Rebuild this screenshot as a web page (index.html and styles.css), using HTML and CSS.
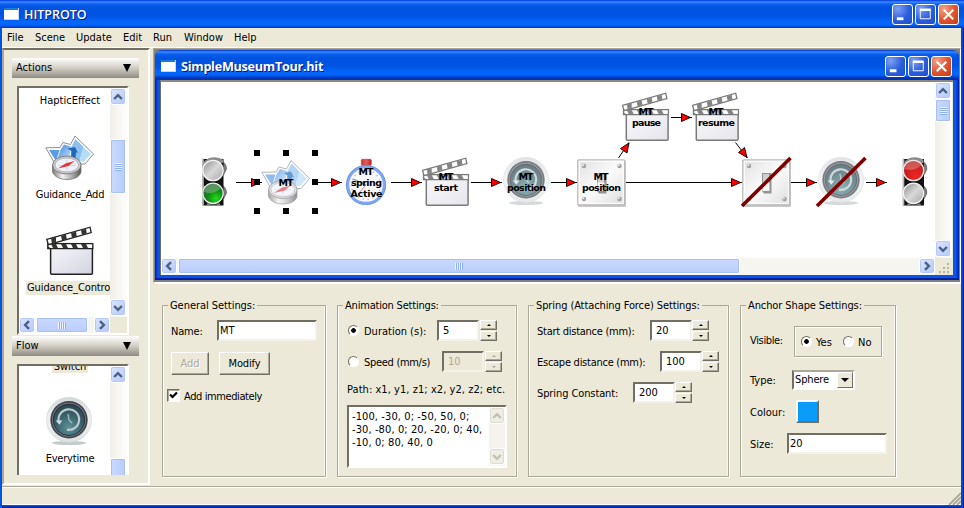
FILE: index.html
```html
<!DOCTYPE html>
<html lang="en">
<head>
<meta charset="utf-8">
<title>HITPROTO</title>
<link rel="stylesheet" href="styles.css">
</head>
<body>
<svg class="defs" aria-hidden="true">
  <defs>
    <linearGradient id="gBody" x1="0" y1="0" x2="1" y2="1"><stop offset="0" stop-color="#f6f6fa"/><stop offset="1" stop-color="#d4d4e0"/></linearGradient>
    <linearGradient id="gMetal" x1="0" y1="0" x2="1" y2="0"><stop offset="0" stop-color="#777"/><stop offset=".35" stop-color="#f2f2f2"/><stop offset=".7" stop-color="#aaa"/><stop offset="1" stop-color="#555"/></linearGradient>
    <linearGradient id="gMap" x1="0" y1="0" x2="1" y2="1"><stop offset="0" stop-color="#3f83dc"/><stop offset="1" stop-color="#c5e4fb"/></linearGradient>
    <linearGradient id="gPlate" x1="0" y1="0" x2="1" y2="1"><stop offset="0" stop-color="#d9d9d9"/><stop offset=".5" stop-color="#fbfbfb"/><stop offset="1" stop-color="#d5d5d5"/></linearGradient>
    <radialGradient id="gFace" cx=".5" cy=".75" r=".7"><stop offset="0" stop-color="#5d9299"/><stop offset=".6" stop-color="#39616a"/><stop offset="1" stop-color="#2c4650"/></radialGradient>
    <linearGradient id="gRim" x1="0" y1="0" x2="0" y2="1"><stop offset="0" stop-color="#d4d8da"/><stop offset=".5" stop-color="#f0f2f2"/><stop offset="1" stop-color="#dce0e1"/></linearGradient>
    <linearGradient id="gOff" x1="0" y1="0" x2="1" y2="1"><stop offset="0" stop-color="#8c8c8c"/><stop offset=".5" stop-color="#d8d8d8"/><stop offset="1" stop-color="#a8a8a8"/></linearGradient>
    <radialGradient id="gGreen" cx=".65" cy=".75" r=".65"><stop offset="0" stop-color="#1ee01a"/><stop offset=".6" stop-color="#128a16"/><stop offset="1" stop-color="#2b6b35"/></radialGradient>
    <radialGradient id="gRed" cx=".6" cy=".75" r=".7"><stop offset="0" stop-color="#f02525"/><stop offset="1" stop-color="#b51c1c"/></radialGradient>
    <linearGradient id="gCap" x1="0" y1="0" x2="1" y2="0"><stop offset="0" stop-color="#c33"/><stop offset=".5" stop-color="#e06060"/><stop offset="1" stop-color="#b22"/></linearGradient>
  </defs>
  <symbol id="clapper" viewBox="0 0 48 50">
    <rect x="4.6" y="20" width="41.8" height="28.3" rx="1" fill="url(#gBody)" stroke="#222" stroke-width="1.5"/>
    <g stroke="#222" stroke-width="1.3">
      <rect x="1.8" y="17.6" width="45" height="5" fill="#fff"/>
      <path d="M.8 13.4 44 1.2 45.2 6.6 2.4 18.6z" fill="#fff"/>
    </g>
    <path d="M5 18h5l2 4H7zM15 18h5l2 4h-5zM25 18h5l2 4h-5zM35 18h5l2 4h-5zM5 12.5l5-1.4 0 5.3-4 1.2zM15 9.8l5-1.4.8 4.8-4.8 1.4zM25 7l5-1.4.8 4.8-4.8 1.4zM35 4.2l5-1.4.8 4.6-4.8 1.5z" fill="#333"/>
    <path d="M1.5 20v3h4z" fill="#222"/>
  </symbol>
  <symbol id="guide" viewBox="0 0 50 46">
    <path d="M.8 12.800 15 12.500 18 7.500 25.500 9.500 30 1 48.500 19 40 29 10 29z" fill="#fff" stroke="#8a8f98" stroke-width="1" stroke-linejoin="round"/>
    <path d="M4 15 14.500 15 11 26z" fill="#5b9be6"/>
    <path d="M15.500 15 19 9.500 26 11.500 24 25 12 25z" fill="url(#gMap)"/>
    <path d="M26.500 11.500 30.500 4 38.500 12 34.500 26 25 26z" fill="#8cc0f0"/>
    <path d="M38.500 12 46 19 38.500 27 34.500 26z" fill="#b5dcf8"/>
    <path d="M22.500 13.500 30 12 33 18 31 17.300 30.500 23.500 26 23.500 26.500 16z" fill="#1d68bb"/>
    <path d="M7.500 30v7c2 5 8 7.500 14.500 7.500S35 42 36 37v-7z" fill="url(#gMetal)" stroke="#777" stroke-width=".8"/>
    <ellipse cx="21.800" cy="30" rx="14.200" ry="9" fill="#ccc" stroke="#777" stroke-width=".9"/>
    <ellipse cx="21.800" cy="30" rx="11.800" ry="7" fill="#eef0fb" stroke="#999" stroke-width=".6"/>
    <path d="M22 24.500v11M14 30.500h16" stroke="#b4c0d0" stroke-width=".6"/>
    <path d="M13 33.500 20.500 28.500l9-2.500L23.500 31z" fill="#e23434"/>
  </symbol>
  <symbol id="clock" viewBox="0 0 46 49">
    <ellipse cx="23" cy="46" rx="17" ry="2" fill="#aeb8b8" opacity=".75"/>
    <circle cx="23" cy="22.800" r="22.500" fill="url(#gRim)" stroke="#d2d6d8" stroke-width=".7"/>
    <circle cx="23" cy="22.800" r="18.700" fill="#40444a"/>
    <circle cx="23" cy="22.800" r="17" fill="#787c80"/>
    <circle cx="23" cy="22.800" r="15.800" fill="url(#gFace)" stroke="#223" stroke-width=".8"/>
    <path d="M12.800 25A10.300 10.300 0 1 1 21 32.700" fill="none" stroke="#bccbce" stroke-width="2.200"/>
    <path d="M9.700 23.500h6.700l-3 4.300z" fill="#d5e0e2"/>
    <path d="M22 17l1 6 3 3" fill="none" stroke="#a5c0c5" stroke-width="1.300"/>
  </symbol>
  <symbol id="plate" viewBox="0 0 49 48">
    <rect x="1" y="1.500" width="48" height="46.500" rx="1" fill="#bbb"/>
    <rect x=".8" y=".8" width="46.800" height="45" rx="1" fill="url(#gPlate)" stroke="#aaa" stroke-width="1.300"/>
    <rect x="2.300" y="2.300" width="44" height="42" fill="none" stroke="#fff"/>
    <g fill="#888"><circle cx="7" cy="7" r="2.200"/><circle cx="42.500" cy="7" r="2.200"/><circle cx="7" cy="40" r="2.200"/><circle cx="42.500" cy="40" r="2.200"/></g>
    <g fill="#eee"><circle cx="6.300" cy="6.300" r="1"/><circle cx="41.800" cy="6.300" r="1"/><circle cx="6.300" cy="39.300" r="1"/><circle cx="41.800" cy="39.300" r="1"/></g>
    <path d="M20 14h9.500v20.500H22L20 32z" fill="#777"/>
    <rect x="21" y="15" width="6" height="9" fill="#c4c4c4"/><rect x="20.500" y="23.500" width="7" height="8.500" fill="#f8f8f8"/>
  </symbol>
  <symbol id="light" viewBox="0 0 26 49">
    <path d="M13 3c9-1 13 4 13 9l-3 6H12zM13 27c9-1 13 4 13 9l-3 6H12z" fill="#777"/>
    <path d="M1.500 2h21v46.500h-21z" fill="#111"/>
    <path d="M1 1.500h1.800v47H1z" fill="#bbb"/>
    <path d="M3 4.500c5-5.500 14-5.500 19-1.500v3H3z" fill="#8c8c8c"/>
    <path d="M3 6v6l8-4M3 29v6l8-4" fill="#c4c4c4"/>
    <path d="M6 47c4 2 9 2 13 0" stroke="#888" stroke-width="1.500" fill="none"/>
  </symbol>
  <symbol id="up" viewBox="0 0 9 9"><path d="M1 6.300 4.500 2.800 8 6.300" fill="none" stroke="currentColor" stroke-width="2.200"/></symbol>
</svg>

<div class="app">
  <header class="titlebar">
    <i class="appicon"></i><h1 class="main-title">HITPROTO</h1>
    <div class="winbtns">
      <button class="wb"><svg viewBox="0 0 20 20"><path d="M4 14.500h7" stroke="#fff" stroke-width="3"/></svg></button>
      <button class="wb"><svg viewBox="0 0 20 20"><path d="M4.500 5.500h10.500v9H4.500z" fill="none" stroke="#fff"/><path d="M4 5h11.500" stroke="#fff" stroke-width="2.500"/></svg></button>
      <button class="wb close"><svg viewBox="0 0 20 20"><path d="M5 5l10 10M15 5 5 15" stroke="#fff" stroke-width="2.200"/></svg></button>
    </div>
  </header>
  <nav class="menu"><span class="m1">File</span><span class="m2">Scene</span><span class="m3">Update</span><span class="m4">Edit</span><span class="m5">Run</span><span class="m6">Window</span><span class="m7">Help</span></nav>

  <div class="work">
    <aside class="side">
      <div class="acc"><span>Actions</span><i></i></div>
      <div class="list actions">
        <div class="items">
          <p class="haptic">HapticEffect</p>
          <svg class="ic-guide"><use href="#guide"/></svg>
          <p class="gadd">Guidance_Add</p>
          <svg class="ic-clap"><use href="#clapper"/></svg>
          <p class="gcon"><span>Guidance_Control</span></p>
        </div>
        <div class="vs"><b class="sb"><svg><use href="#up"/></svg></b><b class="thumb act-thumb"><i></i></b><b class="sb dn"><svg><use href="#up"/></svg></b></div>
        <div class="hs"><b class="sb lf"><svg><use href="#up"/></svg></b><b class="thumb act-h"><i></i></b><b class="sb rt"><svg><use href="#up"/></svg></b></div>
      </div>
      <div class="acc flow-acc"><span>Flow</span><i></i></div>
      <div class="list flow">
        <div class="items">
          <p class="switch"><span>Switch</span></p>
          <svg class="ic-clock"><use href="#clock"/></svg>
          <p class="every">Everytime</p>
        </div>
        <div class="vs"><b class="sb"><svg><use href="#up"/></svg></b><b class="thumb flow-thumb"></b></div>
      </div>
    </aside>

    <main class="right">
      <section class="mdi">
        <div class="doc">
          <header class="titlebar doc-title">
            <i class="appicon"></i><h2 class="doc-name">SimpleMuseumTour.hit</h2>
            <div class="winbtns">
              <button class="wb"><svg viewBox="0 0 20 20"><path d="M4 14.500h7" stroke="#fff" stroke-width="3"/></svg></button>
              <button class="wb"><svg viewBox="0 0 20 20"><path d="M4.500 5.500h10.500v9H4.500z" fill="none" stroke="#fff"/><path d="M4 5h11.500" stroke="#fff" stroke-width="2.500"/></svg></button>
              <button class="wb close"><svg viewBox="0 0 20 20"><path d="M5 5l10 10M15 5 5 15" stroke="#fff" stroke-width="2.200"/></svg></button>
            </div>
          </header>
          <div class="view">
            <svg class="graph" viewBox="161 82 774 176">
              <g stroke="#000" stroke-width="1" fill="none">
                <path d="M236 182.500h26M312 182.500h30M391 182.500h31M471 182.500h31M551 182.500h26M626 182.500h116M791 182.500h26M866 182.500h21M671 117.500h21"/>
                <path d="M618.500 158 629 142.500M745.500 142.500 757.500 158" transform="translate(-10.500 0)" opacity="0"/>
                <path d="M618.500 158 629 142.500M735.500 142.500 747.500 158"/>
              </g>
              <g fill="#f00" stroke="#000" stroke-width=".9">
                <path d="M251.500 178.500v8l9-4zM331.500 178.500v8l9-4zM411.500 178.500v8l9-4zM491.500 178.500v8l9-4zM566.500 178.500v8l9-4zM731.500 178.500v8l9-4zM806.500 178.500v8l9-4zM876.500 178.500v8l9-4zM681.500 113.500v8l9-4z"/>
                <path d="M629 143l-8.500 5.500 6.500 4.500zM747 157.500l-8.500-5 6-5z"/>
              </g>

              <use href="#light" x="201" y="157" width="26" height="49"/>
              <circle cx="213" cy="170.500" r="10.200" fill="url(#gOff)" stroke="#f4f4f4" stroke-width="1.300"/>
              <circle cx="213" cy="193.300" r="10.200" fill="url(#gGreen)" stroke="#e8f2e8" stroke-width="1.300"/>
              <path d="M204 192c2-8 12-11 17-4-5 5-11 6-17 4z" fill="#fff" opacity=".25"/>

              <use href="#guide" x="261" y="159.500" width="50" height="46" opacity=".66"/>
              <path d="M254 150h6v6h-6zM283 150h6v6h-6zM312 150h6v6h-6zM254 179h6v6h-6zM312 179h6v6h-6zM254 208h6v6h-6zM283 208h6v6h-6zM312 208h6v6h-6z"/>

              <g>
                <rect x="361.300" y="159.300" width="10" height="6" rx="1" fill="url(#gCap)" stroke="#b33" stroke-width=".6"/>
                <circle cx="366" cy="185" r="18.300" fill="#fafafe" stroke="#7fa8f2" stroke-width="3"/>
                <circle cx="366" cy="185" r="19.700" fill="none" stroke="#4a7ad4" stroke-width=".6"/>
                <circle cx="366" cy="185" r="14.500" fill="none" stroke="#aab" stroke-width="1.500" stroke-dasharray="1 4"/>
                <path d="M366 185l-13-6" stroke="#9aa" stroke-width="1.500"/><path d="M366 185l-8 9" stroke="#f08080" stroke-width="1"/>
              </g>
              <use href="#clapper" x="421.700" y="157" width="48" height="50" opacity=".6"/>
              <use href="#clock" x="503" y="157" width="46" height="49" opacity=".7"/>
              <use href="#plate" x="577" y="159" width="49" height="48" opacity=".8"/>
              <use href="#clapper" x="621.700" y="92" width="48" height="50" opacity=".6"/>
              <use href="#clapper" x="691.700" y="92" width="48" height="50" opacity=".6"/>
              <use href="#plate" x="742" y="159" width="49" height="48" opacity=".8"/>
              <use href="#clock" x="818" y="157" width="46" height="49" opacity=".7"/>
              <path d="M742 206 790.500 158M817 206 865.500 158" stroke="#800000" stroke-width="3.600"/>

              <use href="#light" x="901.500" y="157" width="26" height="49"/>
              <circle cx="913.500" cy="170.500" r="10.200" fill="url(#gRed)" stroke="#f4e8e8" stroke-width="1.300"/>
              <path d="M904.500 169c2-8 12-11 17-4-5 5-11 6-17 4z" fill="#fff" opacity=".25"/>
              <circle cx="913.500" cy="193.300" r="10.200" fill="url(#gOff)" stroke="#f4f4f4" stroke-width="1.300"/>

              <g class="labels">
                <text x="286" y="186" textLength="15">MT</text>
                <text x="366" y="175" textLength="15">MT</text><text x="366.500" y="186" textLength="31">spring</text><text x="366.500" y="197" textLength="32">Active</text>
                <text x="446" y="180" textLength="15">MT</text><text x="446" y="191" textLength="24">start</text>
                <text x="526" y="180" textLength="15">MT</text><text x="526.500" y="191" textLength="39">position</text>
                <text x="601" y="180" textLength="15">MT</text><text x="601.500" y="191" textLength="39">position</text>
                <text x="646" y="115" textLength="15">MT</text><text x="646.500" y="126" textLength="29">pause</text>
                <text x="716" y="115" textLength="15">MT</text><text x="716.500" y="126" textLength="37">resume</text>
              </g>
            </svg>
            <div class="vs"><b class="sb"><svg><use href="#up"/></svg></b><b class="thumb doc-thumb"><i></i></b><b class="sb dn"><svg><use href="#up"/></svg></b></div>
            <div class="hs"><b class="sb lf"><svg><use href="#up"/></svg></b><b class="thumb doc-h"><i></i></b><b class="sb rt"><svg><use href="#up"/></svg></b></div>
            <svg class="dots" viewBox="0 0 17 17"><path d="M12 5h2v2h-2zM8 9h2v2H8zM12 9h2v2h-2zM4 13h2v2H4zM8 13h2v2H8zM12 13h2v2h-2z" fill="#b8b4a2"/></svg>
          </div>
        </div>
      </section>

      <section class="groups">
        <fieldset class="general"><legend><span class="l1">General Settings:</span></legend>
          <div class="row r1"><label class="name">Name:</label><span class="inp wide">MT</span></div>
          <div class="row r-btn"><span class="btn off">Add</span><span class="btn mod">Modify</span></div>
          <div class="row r-chk"><span class="chk"><svg viewBox="0 0 9 9"><path d="M1 3.500 3.500 6 8 1.500" fill="none" stroke="#000" stroke-width="2.200"/></svg></span><label class="imm">Add immediately</label></div>
        </fieldset>
        <fieldset class="anim"><legend><span class="l2">Animation Settings:</span></legend>
          <div class="row r1"><i class="radio on"></i><label class="dur">Duration (s):</label><span class="inp num">5</span><span class="spin"><b></b><b></b></span></div>
          <div class="row r2"><i class="radio"></i><label class="spd">Speed (mm/s)</label><span class="inp num dis">10</span><span class="spin dis"><b></b><b></b></span></div>
          <p class="path">Path: x1, y1, z1; x2, y2, z2; etc.</p>
          <div class="area"><div class="lines"><span class="p1">-100, -30, 0; -50, 50, 0;</span><br><span class="p2">-30, -80, 0; 20, -20, 0; 40,</span><br><span class="p3">-10, 0; 80, 40, 0</span></div>
            <div class="vs dead"><b class="sb"><svg><use href="#up"/></svg></b><b class="sb dn"><svg><use href="#up"/></svg></b></div></div>
        </fieldset>
        <fieldset class="spring"><legend><span class="l3">Spring (Attaching Force) Settings:</span></legend>
          <div class="row r1"><label class="sd">Start distance (mm):</label><span class="inp num">20</span><span class="spin"><b></b><b></b></span></div>
          <div class="row r2"><label class="ed">Escape distance (mm):</label><span class="inp num">100</span><span class="spin"><b></b><b></b></span></div>
          <div class="row r2"><label class="sc">Spring Constant:</label><span class="inp num">200</span><span class="spin"><b></b><b></b></span></div>
        </fieldset>
        <fieldset class="anchor"><legend><span class="l4">Anchor Shape Settings:</span></legend>
          <div class="row r-vis"><label class="vis">Visible:</label><span class="box"><i class="radio on"></i><label class="yes">Yes</label><i class="radio"></i><label class="no">No</label></span></div>
          <div class="row r-type"><label class="type">Type:</label><span class="sel"><span class="sph">Sphere</span><b></b></span></div>
          <div class="row r-col"><label class="col">Colour:</label><span class="swatch"></span></div>
          <div class="row r-size"><label class="size">Size:</label><span class="inp wide">20</span></div>
        </fieldset>
      </section>
    </main>
  </div>
  <footer class="status"><svg viewBox="0 0 13 13"><path d="M1 13 13 1M5 13l8-8M9 13l4-4" stroke="#aca899" stroke-width="1.800"/></svg></footer>
</div>
</body>
</html>
```
FILE: styles.css
```css
* { box-sizing: border-box; }
html, body { margin: 0; height: 508px; overflow: hidden; }
body { font: 11px/13px "DejaVu Sans Condensed", "DejaVu Sans", sans-serif; font-stretch: condensed; color: #000; background: #ece9d8; }
p, h1, h2, fieldset, legend { margin: 0; padding: 0; }
i, b { display: block; flex: none; }
label, span { white-space: nowrap; }
.defs { position: absolute; width: 0; height: 0; }

.app { width: 964px; height: 508px; padding: 0 3px 3px 2px; background: linear-gradient(90deg, #0054e3 2px, transparent 2px 961px, #0046e0 961px 963px, #001ea0 963px), linear-gradient(#0054e3 506px, #001ea0 507px); display: flex; flex-direction: column; }

.titlebar { height: 28px; margin: 0 -3px 0 -2px; padding: 1px 5px 0 4px; display: flex; align-items: center; flex: none; background: linear-gradient(#0831d9 0, #1663ee 1px, #3a8cff 2px, #0a5ff0 4px, #0053df 8px, #0054e3 16px, #0566fc 22px, #0264fa 25px, #0043cf 27px, #0034b8 28px); }
.appicon { width: 15px; height: 12px; border: solid #c8d8ea; border-width: 0 1px 1px 0; background: linear-gradient(#1a7ad8 2px, #fff 2px); margin-top: -1px; }
h1, h2 { font: bold 13px/18px "Open Sans", "Noto Sans", sans-serif; color: #fff; text-shadow: 1px 1px 0 #0a1883; margin-left: 5px; white-space: nowrap; }
.main-title { font-weight: 600; font-size: 12.5px; }
.winbtns { margin-left: auto; display: flex; gap: 2px; }
.wb { width: 21px; height: 21px; padding: 0; border: 1px solid #fff; border-radius: 3px; background: radial-gradient(circle at 25% 20%, #7f9ff0, #2a5ddc 55%, #1c4fcc); flex: none; }
.wb svg { display: block; width: 19px; height: 19px; }
.close { background: radial-gradient(circle at 25% 20%, #f0a088, #e0532e 55%, #c33c14); }

.menu { height: 20px; background: #ece9d8; display: flex; align-items: center; flex: none; border-bottom: 1px solid #fff; }
.menu span { width: 41px; }
.menu .m1 { margin-left: 5px; width: 28px; }
.menu .m3 { width: 47px; } .menu .m4 { width: 30px; } .menu .m5 { width: 31px; } .menu .m6 { width: 50px; }

.work { display: flex; height: 438px; background: #ece9d8; flex: none; }
.side { width: 148px; height: 437px; border: 2px solid; border-color: #716f64 #fff #fff #aca899; padding: 8px 0 0 8px; margin-right: 3px; flex: none; }
.acc { width: 127px; height: 20px; margin-bottom: 8px; padding: 0 8px 1px 4px; background: linear-gradient(#fff, #d2cec4 50%, #8e8b82); display: flex; justify-content: space-between; align-items: center; }
.acc i { border: 4px solid transparent; border-top: 8px solid #000; border-bottom: 0; }
.list { margin-left: 5px; width: 112px; border: 2px solid; border-color: #716f64 #fff #fff #716f64; background: #fff; display: grid; grid-template-columns: 91px 17px; overflow: hidden; }
.actions { height: 249px; grid-template-rows: 229px 16px; }
.flow-acc { margin-top: 1px; }
.flow { height: 111px; border-bottom: 0; grid-template-rows: 109px; }
.items { overflow: hidden; text-align: center; }
.items p { width: 102px; height: 14px; white-space: nowrap; }
.items svg { display: block; margin-left: 27px; }
.haptic { margin-top: 6px; }
.items .ic-guide { width: 50px; height: 46px; margin-top: 27px; margin-left: 26px; }
.items .gadd { margin-top: 7px; letter-spacing: -.2px; }
.items .ic-clap { width: 48px; height: 50px; margin-top: 24px; margin-left: 26.500px; }
.items .gcon { margin-top: 5px; width: 110px; margin-left: 7px; text-align: left; background: #ece9d8; padding-left: 1px; letter-spacing: -.1px; }
.items .switch { height: 7px; line-height: 1px; }
.switch span { display: inline-block; background: #ece9d8; height: 7px; padding: 0 2px; }
.ic-clock { width: 46px; height: 49px; margin-top: 24px; }
.items .every { margin-top: 6px; letter-spacing: -.2px; }

.vs, .hs { background: #f6f5f0; display: flex; }
.vs { flex-direction: column; background: linear-gradient(90deg, #f0eee8, #fefefc); padding-bottom: 1px; }
.sb { width: 16px; height: 17px; border: 1px solid #fff; border-radius: 3px; box-shadow: inset 0 0 0 1px #b4c8f6; background: linear-gradient(135deg, #dce6ff, #b4c8fa); color: #4d6185; display: flex; align-items: center; justify-content: center; }
.sb svg { width: 10px; height: 10px; }
.dn { margin-top: auto; } .dn svg { transform: rotate(180deg); }
.lf svg { transform: rotate(-90deg); } .rt svg { transform: rotate(90deg); }
.rt { margin-left: auto; }
.hs .sb { width: 16px; height: 16px; }
.thumb { border: 1px solid #fff; border-radius: 2px; box-shadow: inset 0 0 0 1px #a6bff5; background: linear-gradient(90deg, #cad9ff, #b9cdfb); width: 16px; display: flex; align-items: center; justify-content: center; }
.thumb i { width: 7px; height: 8px; background: repeating-linear-gradient(#eef4ff 0 1px, #8cb0f8 1px 2px); }
.hs .thumb { height: 16px; background: linear-gradient(#cad9ff, #b9cdfb); margin-left: 1px; }
.hs .thumb i { width: 8px; height: 7px; background: repeating-linear-gradient(90deg, #eef4ff 0 1px, #8cb0f8 1px 2px); }
.act-thumb { height: 55px; margin-top: 34px; }
.act-h { width: 52px; }
.flow-thumb { height: 50px; margin-top: 75px; flex: none; }
.actions .hs { grid-column: 1; height: 16px; background: #f6f5f0; box-shadow: 20px 0 #ece9d8; }

.right { width: 808px; flex: none; }
.mdi { height: 236px; border: 2px solid; border-color: #aca899 #fff #fff #aca899; border-width: 1px 1px 2px 1px; background: #808080; padding: 1px 1px 2px 1px; }
.doc { width: 804px; height: 230px; border-radius: 7px 7px 0 0; background: linear-gradient(90deg, #0019cf, #0855e8 3px, #0855e8 801px, #0019a8); overflow: hidden; padding: 0 5px 5px; box-shadow: inset 0 -2px #001ea0; }
.doc-title { height: 30px; margin: 0 -5px; padding: 2px 7px 0 6px; border-radius: 7px 7px 0 0; }
.doc-name { font-size: 12.600px; letter-spacing: -.25px; padding-top: 2px; }
.view { width: 793px; height: 195px; border: solid #716f64; border-width: 2px 0 0 1px; border-top-color: #8d8a7c; background: #ece9d8; display: grid; grid-template: 176px 17px / 774px 17px; }
.graph { display: block; width: 774px; height: 176px; background: #fff; overflow: hidden; }
.labels { font: bold 9.500px "DejaVu Sans", sans-serif; text-anchor: middle; }
.doc-thumb { height: 23px; }
.doc-h { width: 562px; }
.dots { width: 17px; height: 17px; }

.groups { display: flex; gap: 11px; padding: 15px 0 0 9px; align-items: flex-start; }
fieldset { height: 178px; min-width: 0; border: 1px solid #aca899; box-shadow: 1px 1px 0 #fff, inset -1px 0 0 #f8f6ec, inset 1px 0 0 #fff; flex: none; padding: 0 0 0 9px; }
legend { height: 12px; line-height: 13px; padding: 0 2px; margin-left: -4px; background: #ece9d8; }
.l1 { letter-spacing: -.05px; } .l2 { letter-spacing: -.2px; } .l3 { letter-spacing: -.1px; } .l4 { letter-spacing: -.1px; }
.general { width: 164px; } .anim { width: 180px; } .spring { width: 201px; } .anchor { width: 156px; }
.row { display: flex; align-items: center; height: 21px; }
.r1 { margin-top: 9px; } .r2 { margin-top: 10px; }
.row label { flex: none; padding-top: 1px; }
.inp { height: 21px; border: 2px solid; border-color: #716f64 #f4f2e8 #f4f2e8 #716f64; background: #fff; line-height: 17px; padding-left: 1px; flex: none; }
.wide { width: 100px; }
.num { width: 42px; padding-left: 4px; }
.inp.dis { background: #ece9d8; color: #aca899; }
.spin { width: 17px; height: 21px; margin-left: 1px; display: flex; flex-direction: column; gap: 1px; }
.spin b { height: 10px; border: 1px solid; border-color: #fff #716f64 #716f64 #fff; box-shadow: inset -1px -1px #aca899; display: flex; align-items: center; justify-content: center; }
.spin b::after { content: ""; border: 2px solid transparent; border-bottom-color: #000; border-top: 0; }
.spin b + b::after { border-top: 2px solid #000; border-bottom: 0; }
.spin.dis b::after { border-bottom-color: #aca899; border-top-color: #aca899; }
.name { width: 46px; margin-left: -1px; letter-spacing: -.2px; }
.r-btn { margin: 10px 0 0 -1px; height: 24px; gap: 10px; }
.btn { width: 38px; height: 23px; border: 1px solid; border-color: #fff #716f64 #716f64 #fff; box-shadow: inset -1px -1px #aca899; text-align: center; line-height: 21px; }
.off { color: #aca899; text-shadow: 1px 1px #fff; }
.mod { width: 51px; letter-spacing: -.15px; }
.r-chk { margin: 14px 0 0 -5px; height: 13px; }
.chk { width: 13px; height: 13px; border: 1px solid; border-color: #716f64 #fff #fff #716f64; box-shadow: inset 1px 1px #aca899; background: #fff; padding: 1px; flex: none; }
.chk svg { display: block; width: 9px; height: 9px; }
.imm { margin-left: 4px; letter-spacing: -.4px; }
.radio { width: 11px; height: 11px; border-radius: 50%; border: 1.500px solid; border-color: #716f64 #fff #fff #716f64; background: #fff; }
.radio.on { background: radial-gradient(circle, #000 2px, #fff 2.600px); }
.anim .radio { margin: 0 5px 0 1px; }
.dur { width: 73px; } .spd { width: 78px; letter-spacing: -.3px; }
.path { margin-top: 11px; white-space: nowrap; letter-spacing: .05px; }
.area { width: 160px; height: 63px; margin-top: 9px; border: 2px solid; border-color: #716f64 #fff #fff #716f64; background: #fff; display: flex; justify-content: space-between; }
.lines { padding: 3px 0 0 3px; line-height: 13px; letter-spacing: .1px; }
.area .vs { width: 16px; background: #f4f3ee; }
.dead .sb { background: #f0eee4; box-shadow: inset 0 0 0 1px #dedbd0; color: #c4c1b4; }
.spring label { margin-left: -1px; letter-spacing: -.26px; }
.sd { width: 113px; } .ed { width: 123px; } .spring .sc { width: 96px; letter-spacing: -.1px; }
.spring .spin { margin-left: 0; }
.r-vis { height: 31px; margin-top: 15px; }
.vis { width: 44px; margin-top: -4px; letter-spacing: -.35px; }
.box { width: 88px; height: 31px; border: 1px solid #aca899; box-shadow: 1px 1px #fff, inset 1px 1px #fff; display: flex; align-items: center; padding-left: 6px; }
.yes { margin-left: 4px; width: 27px; } .no { margin-left: 4px; }
.r-type { margin-top: 12px; } .type { width: 42px; }
.sel { width: 63px; height: 20px; border: 2px solid; border-color: #aca899 #fff #fff #716f64; background: #fff; display: flex; justify-content: space-between; align-items: center; padding-left: 1px; }
.sph { letter-spacing: -.15px; }
.sel b { width: 16px; height: 16px; background: #ece9d8; border: 1px solid; border-color: #fff #716f64 #716f64 #fff; padding: 5px 3px; }
.sel b::after { content: ""; display: block; width: 0; border: 4px solid transparent; border-top-color: #000; border-bottom: 0; }
.r-col { margin-top: 10px; height: 23px; } .col { width: 46px; }
.swatch { width: 23px; height: 23px; border: 2px solid; border-color: #fff #716f64 #716f64 #fff; background: #0a9bfb; }
.r-size { margin-top: 10px; } .size { width: 37px; }

.status { height: 19px; border-top: 1px solid #aca899; box-shadow: inset 0 1px #fff, inset 0 -1px #fff; background: #ece9d8; display: flex; justify-content: flex-end; align-items: flex-end; }
.status svg { width: 13px; height: 13px; }
```
